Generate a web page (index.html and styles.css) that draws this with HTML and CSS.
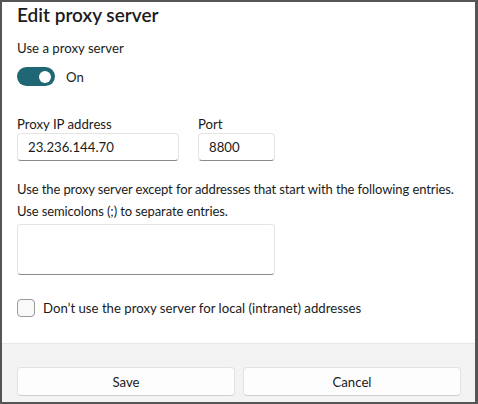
FILE: index.html
```html
<!DOCTYPE html>
<html lang="en">
  <head>
    <meta charset="UTF-8" />
    <meta name="viewport" content="width=device-width, initial-scale=1.0" />
    <title>Edit proxy server</title>
    <link rel="stylesheet" href="styles.css">
  </head>
  <body>
    <div class="dialog">
      <div class="content">
        <h1 class="title">Edit proxy server</h1>
        <div class="label">Use a proxy server</div>
        <div class="toggle-row">
          <span class="toggle"><span class="knob"></span></span>
          <span class="toggle-text">On</span>
        </div>
        <div class="fields">
          <div class="field">
            <div class="label">Proxy IP address</div>
            <div class="input ip">23.236.144.70</div>
          </div>
          <div class="field">
            <div class="label">Port</div>
            <div class="input port">8800</div>
          </div>
        </div>
        <p class="note">Use the proxy server except for addresses that start with the following entries.<br>Use semicolons (;) to separate entries.</p>
        <div class="input area"></div>
        <div class="check-row">
          <span class="checkbox"></span>
          <span class="check-text">Don’t use the proxy server for local (intranet) addresses</span>
        </div>
      </div>
      <div class="footer">
        <button class="btn">Save</button>
        <button class="btn">Cancel</button>
      </div>
    </div>
  </body>
</html>
```

FILE: styles.css
```css
* {
  margin: 0;
  padding: 0;
  box-sizing: border-box;
}
body {
  width: 478px;
  height: 404px;
  font-family: Lato, "Noto Sans", sans-serif;
  color: #1b1b1b;
  background: #fff;
}
.dialog {
  width: 478px;
  height: 404px;
  border: 2px solid #555;
  border-right-width: 3px;
  display: flex;
  flex-direction: column;
  background: #fff;
}
.content {
  flex: 1;
  padding: 0 15px;
}
.title {
  font-size: 19px;
  font-weight: 600;
  line-height: 24px;
  margin-top: 1px;
}
.label {
  font-size: 13.2px;
  line-height: 18px;
}
.content > .label {
  margin-top: 12px;
}
.toggle-row {
  display: flex;
  align-items: center;
  gap: 11px;
  margin-top: 10px;
}
.toggle {
  width: 38px;
  height: 19px;
  border-radius: 10px;
  background: #1f6774;
  display: flex;
  align-items: center;
  justify-content: flex-end;
  padding-right: 4px;
}
.knob {
  width: 12px;
  height: 12px;
  border-radius: 50%;
  background: #fff;
}
.toggle-text {
  font-size: 13.2px;
}
.fields {
  display: flex;
  gap: 19px;
  margin-top: 29px;
}
.input {
  height: 28px;
  border: 1px solid #e4e4e4;
  border-bottom-color: #8a8a8a;
  border-radius: 4px;
  background: #fff;
  font-size: 13.2px;
  line-height: 26px;
  padding-left: 10px;
}
.ip {
  width: 162px;
}
.port {
  width: 77px;
}
.note {
  font-size: 13px;
  letter-spacing: -0.1px;
  line-height: 22px;
  margin-top: 17px;
  margin-right: -12px;
  white-space: nowrap;
}
.area {
  width: 258px;
  height: 51px;
  margin-top: 2px;
}
.check-row {
  display: flex;
  align-items: center;
  gap: 8px;
  margin-top: 24px;
}
.checkbox {
  width: 18px;
  height: 18px;
  border: 1px solid #9a9a9a;
  border-radius: 4px;
  background: #f9f9f9;
}
.check-text {
  font-size: 13.2px;
}
.footer {
  height: 59px;
  background: #f3f3f3;
  border-top: 1px solid #e8e8e8;
  display: flex;
  gap: 8px;
  padding: 23px 14px 0 15px;
}
.btn {
  flex: 1;
  height: 29px;
  border: 1px solid #e2e2e2;
  border-bottom-color: #cfcfcf;
  border-radius: 4px;
  background: #fdfdfd;
  font-family: inherit;
  font-size: 13.2px;
  color: #1b1b1b;
}
```
